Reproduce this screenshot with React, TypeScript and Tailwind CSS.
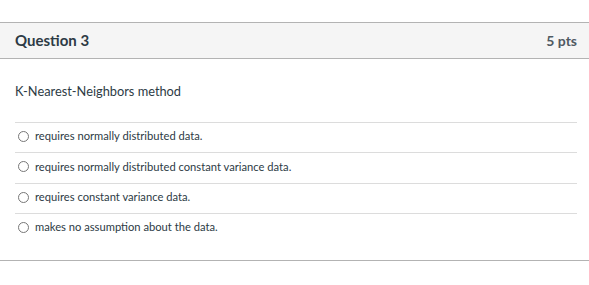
const answers = [
  "requires normally distributed data.",
  "requires normally distributed constant variance data.",
  "requires constant variance data.",
  "makes no assumption about the data.",
];

export default function App() {
  return (
    <div className="w-[589px] h-[285px] bg-white pt-[22px] font-['Lato',sans-serif] text-[#2d3b45]">
      <section className="border-t border-b border-[#b3b3b3]">
        <header className="h-[36px] bg-[#f5f5f5] border-b border-[#b3b3b3] flex items-center justify-between pl-[15px] pr-[12px]">
          <h2 className="text-[15px] font-bold">Question 3</h2>
          <span className="text-[14px] font-bold text-[#4f5962]">5 pts</span>
        </header>
        <div className="pl-[15px] pr-[12px] pt-[22px] pb-[17px]">
          <p className="text-[12.8px] leading-[20px]">K-Nearest-Neighbors method</p>
          <ul className="mt-[21px]">
            {answers.map((a) => (
              <li
                key={a}
                className="h-[30.33px] border-t border-[#dcdcdc] flex items-center gap-[6px] pl-[3px] pb-[2px] text-[11.2px]"
              >
                <span className="w-[11px] h-[11px] rounded-full border border-[#777]" />
                <span>{a}</span>
              </li>
            ))}
          </ul>
        </div>
      </section>
    </div>
  );
}
